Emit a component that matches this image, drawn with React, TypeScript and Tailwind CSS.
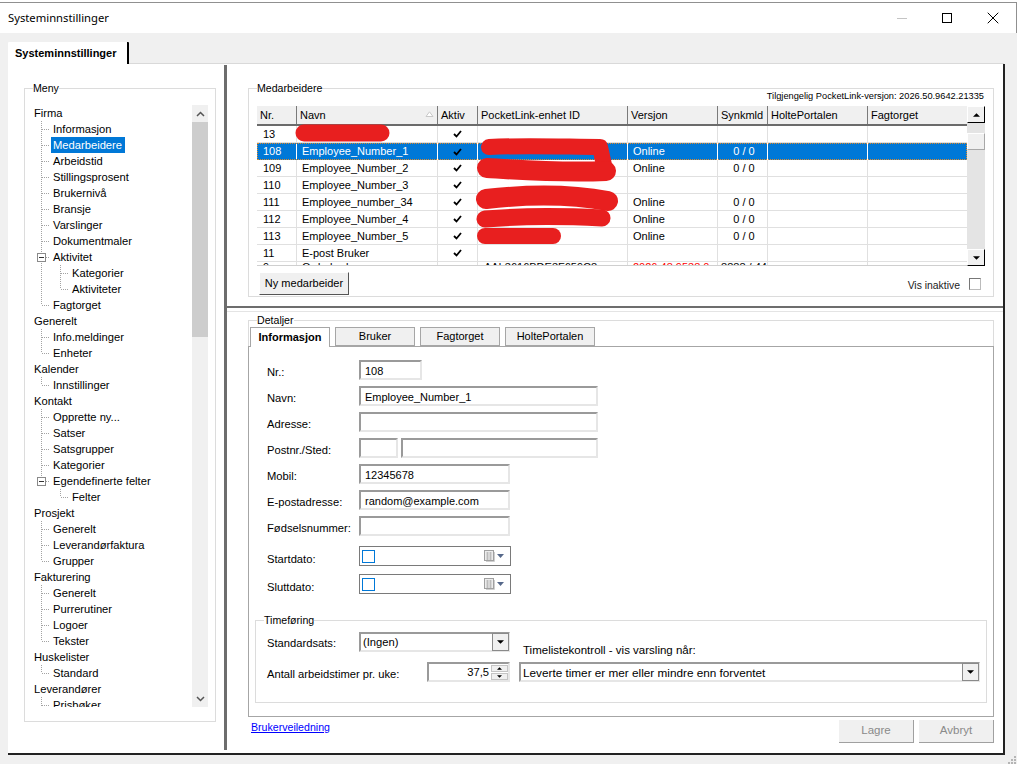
import React from "react";
import { X } from "lucide-react";

type TreeRow = { label: string; depth: 0 | 1 | 2; last?: boolean; box?: boolean; cont?: boolean; selected?: boolean };

const tree: TreeRow[] = [
  { label: "Firma", depth: 0 },
  { label: "Informasjon", depth: 1 },
  { label: "Medarbeidere", depth: 1, selected: true },
  { label: "Arbeidstid", depth: 1 },
  { label: "Stillingsprosent", depth: 1 },
  { label: "Brukernivå", depth: 1 },
  { label: "Bransje", depth: 1 },
  { label: "Varslinger", depth: 1 },
  { label: "Dokumentmaler", depth: 1 },
  { label: "Aktivitet", depth: 1, box: true },
  { label: "Kategorier", depth: 2, cont: true },
  { label: "Aktiviteter", depth: 2, cont: true, last: true },
  { label: "Fagtorget", depth: 1, last: true },
  { label: "Generelt", depth: 0 },
  { label: "Info.meldinger", depth: 1 },
  { label: "Enheter", depth: 1, last: true },
  { label: "Kalender", depth: 0 },
  { label: "Innstillinger", depth: 1, last: true },
  { label: "Kontakt", depth: 0 },
  { label: "Opprette ny...", depth: 1 },
  { label: "Satser", depth: 1 },
  { label: "Satsgrupper", depth: 1 },
  { label: "Kategorier", depth: 1 },
  { label: "Egendefinerte felter", depth: 1, box: true, last: true },
  { label: "Felter", depth: 2, last: true },
  { label: "Prosjekt", depth: 0 },
  { label: "Generelt", depth: 1 },
  { label: "Leverandørfaktura", depth: 1 },
  { label: "Grupper", depth: 1, last: true },
  { label: "Fakturering", depth: 0 },
  { label: "Generelt", depth: 1 },
  { label: "Purrerutiner", depth: 1 },
  { label: "Logoer", depth: 1 },
  { label: "Tekster", depth: 1, last: true },
  { label: "Huskelister", depth: 0 },
  { label: "Standard", depth: 1, last: true },
  { label: "Leverandører", depth: 0 },
  { label: "Prisbøker", depth: 1 },
];

const employees = [
  { nr: "13", name: "", version: "", sync: "" },
  { nr: "108", name: "Employee_Number_1", version: "Online", sync: "0 / 0", selected: true },
  { nr: "109", name: "Employee_Number_2", version: "Online", sync: "0 / 0" },
  { nr: "110", name: "Employee_Number_3", version: "", sync: "" },
  { nr: "111", name: "Employee_number_34", version: "Online", sync: "0 / 0" },
  { nr: "112", name: "Employee_Number_4", version: "Online", sync: "0 / 0" },
  { nr: "113", name: "Employee_Number_5", version: "Online", sync: "0 / 0" },
  { nr: "11", name: "E-post Bruker", version: "", sync: "" },
  { nr: "9", name: "Ordrebruker", pocket: "AAb3616BDE3F659C8", version: "2026.48.9538.0", sync: "8888 / 44", old: true },
];

const columns = ["Nr.", "Navn", "Aktiv", "PocketLink-enhet ID", "Versjon", "Synkmld", "HoltePortalen", "Fagtorget"];

const gridCols = "grid grid-cols-[40px_141px_40px_150px_90px_50px_100px_99px]";
const sunken = "border-2 border-t-[#9a9a9a] border-l-[#9a9a9a] border-r-[#e6e6e6] border-b-[#e6e6e6]";
const raised = "border border-t-white border-l-white border-r-black border-b-black";

const Connector = ({ row }: { row: TreeRow }) => {
  const dots = { stroke: "#a3a3a3", strokeWidth: 1, strokeDasharray: "1 1" };
  if (row.depth === 2) {
    return (
      <svg width="47" height="16" className="shrink-0">
        {row.cont && <line x1="16.5" y1="0" x2="16.5" y2="16" {...dots} />}
        <line x1="35.5" y1="0" x2="35.5" y2={row.last ? 8 : 16} {...dots} />
        <line x1="36" y1="8.5" x2="44" y2="8.5" {...dots} />
      </svg>
    );
  }
  return (
    <svg width="28" height="16" className="shrink-0">
      <line x1="16.5" y1="0" x2="16.5" y2={row.last ? 8 : 16} {...dots} />
      <line x1="17" y1="8.5" x2="25" y2="8.5" {...dots} />
      {row.box && (
        <g>
          <rect x="12.5" y="4.5" width="8" height="8" fill="#fff" stroke="#8a8a8a" />
          <line x1="14" y1="8.5" x2="19" y2="8.5" stroke="#333" />
        </g>
      )}
    </svg>
  );
};

const MenuTree = () => (
  <div className="mt-[10px] flex h-[602px] w-[183px]">
    <div className="min-w-0 flex-1 overflow-hidden">
      {tree.map((row, i) => (
        <div key={i} className="flex h-4 shrink-0 whitespace-nowrap leading-[14px]">
          {row.depth === 0 ? (
            <span className="pl-[9px] pt-px">{row.label}</span>
          ) : (
            <>
              <Connector row={row} />
              <span className={row.selected ? "-ml-[2px] h-4 w-[74px] bg-[#0078d7] pl-[2px] pt-px text-white" : "pt-px"}>
                {row.label}
              </span>
            </>
          )}
        </div>
      ))}
    </div>
    <div className="flex w-4 shrink-0 flex-col bg-[#f0f0f0]">
      <div className="flex h-[17px] items-center justify-center">
        <svg width="9" height="6" viewBox="0 0 9 6" fill="none" stroke="#555" strokeWidth="1.5">
          <path d="M1 5l3.5-3.5L8 5" />
        </svg>
      </div>
      <div className="h-[215px] bg-[#cdcdcd]" />
      <div className="flex-1" />
      <div className="flex h-[17px] items-center justify-center">
        <svg width="9" height="6" viewBox="0 0 9 6" fill="none" stroke="#555" strokeWidth="1.5">
          <path d="M1 1l3.5 3.5L8 1" />
        </svg>
      </div>
    </div>
  </div>
);

const Tick = () => (
  <svg width="9" height="8" viewBox="0 0 9 8" fill="none" stroke="#000" strokeWidth="1.8">
    <path d="M1 4l2.5 2.5L8 1" />
  </svg>
);

const Triangle = ({ down = true, size = 7 }: { down?: boolean; size?: number }) => (
  <svg width={size} height={Math.ceil(size / 2)} viewBox="0 0 8 4" fill="#000">
    <path d={down ? "M0 0h8L4 4z" : "M0 4h8L4 0z"} />
  </svg>
);

const EmployeeGrid = () => (
  <div className="relative ml-2 flex h-[160px] w-[728px] text-[11px]">
    <div className="w-[710px] overflow-hidden border-b border-[#cfcfcf]">
      <div className={`${gridCols} h-5 border-b-2 border-[#6b6b6b] bg-[#f0f0f0]`}>
        {columns.map((c, i) => (
          <div key={c} className={`relative h-[18px] truncate border-[#7a7a7a] pl-[3px] leading-[19px] ${i < 7 ? "border-r" : ""}`}>
            {c}
            {i === 1 && (
              <svg width="9" height="6" viewBox="0 0 9 6" className="absolute top-[5px] right-[3px]" fill="#fff" stroke="#c8c8c8">
                <path d="M4.5 .8L8 5.5H1z" />
              </svg>
            )}
          </div>
        ))}
      </div>
      {employees.map((e) => (
        <div
          key={e.nr}
          className={`${gridCols} h-[17px] ${
            e.selected
              ? "bg-[#0078d7] leading-[16px] text-white outline-1 -outline-offset-1 outline-dotted outline-[#e08a2a]"
              : e.old
                ? "leading-[11px]"
                : "border-b border-[#e0e0e0] leading-[16px]"
          }`}
        >
          <div className={`border-r pl-[6px] ${e.selected ? "border-white" : "border-[#e0e0e0]"}`}>{e.nr}</div>
          <div className={`border-r pl-[5px] ${e.selected ? "border-white" : "border-[#e0e0e0]"}`}>{e.name}</div>
          <div className={`flex items-center justify-center border-r ${e.selected ? "border-white" : "border-[#e0e0e0]"}`}>
            {!e.old && <Tick />}
          </div>
          <div className={`border-r pl-[6px] ${e.selected ? "border-white" : "border-[#e0e0e0]"}`}>{e.pocket}</div>
          <div className={`border-r pl-[5px] ${e.selected ? "border-white" : "border-[#e0e0e0]"} ${e.old ? "text-[#f00]" : ""}`}>
            {e.version}
          </div>
          <div className={`border-r pl-[3px] text-center ${e.selected ? "border-white" : "border-[#e0e0e0]"}`}>{e.sync}</div>
          <div className={`border-r ${e.selected ? "border-white" : "border-[#e0e0e0]"}`} />
          <div />
        </div>
      ))}
    </div>
    <div className="flex w-[18px] shrink-0 flex-col bg-[#e4e4e4]">
      <div className={`flex h-[17px] items-center justify-center bg-[#f0f0f0] ${raised}`}>
        <Triangle down={false} />
      </div>
      <div className="mt-[10px] h-[17px] border border-t-white border-l-white border-r-[#a8a8a8] border-b-[#a8a8a8] bg-[#f0f0f0]" />
      <div className="flex-1" />
      <div className={`flex h-[17px] items-center justify-center bg-[#f0f0f0] ${raised}`}>
        <Triangle />
      </div>
    </div>
    {/* Red scribbles painted over the screenshot */}
    <svg viewBox="257 106 728 160" className="pointer-events-none absolute inset-0 h-[160px] w-[728px]" fill="none" stroke="#e81f1f" strokeLinecap="round" strokeLinejoin="round">
      <path d="M304 133H381" strokeWidth="17" />
      <path d="M489 147C530 145 570 147 600 147L604 165" strokeWidth="16" />
      <path d="M487 168C520 170 560 173 606 171" strokeWidth="20" />
      <path d="M486 199C530 194 570 194 608 201" strokeWidth="20" />
      <path d="M485 219C520 216 560 216 602 218" strokeWidth="17" />
      <path d="M485 236H553" strokeWidth="16" />
    </svg>
  </div>
);

const FormRow = ({ label, widths, value, className = "mt-[6px]" }: { label: string; widths: string[]; value?: string; className?: string }) => (
  <div className={`flex h-5 items-center ${className}`}>
    <div className="w-[92px] shrink-0 pt-[4px]">{label}</div>
    <div className="flex gap-[3px] text-[11px]">
      {widths.map((w, i) => (
        <div key={i} className={`h-5 pl-1 leading-[18px] ${sunken} ${w}`}>
          {i === 0 ? value : ""}
        </div>
      ))}
    </div>
  </div>
);

const DateRow = ({ label, className }: { label: string; className: string }) => (
  <div className={`flex h-5 items-center ${className}`}>
    <div className="w-[92px] shrink-0 pt-[6px]">{label}</div>
    <div className="flex h-5 w-[152px] items-center border border-[#7a7a7a] pl-[2px] pr-[6px]">
      <div className="h-[13px] w-[13px] border border-[#0078d7]" />
      <div className="flex-1" />
      <svg width="11" height="12" viewBox="0 0 11 12" className="mr-[2px]">
        <rect x=".5" y=".5" width="9" height="10" fill="#ececec" stroke="#a0a0a0" />
        <path d="M2 3h6M2 5h6M2 7h6M2 9h6M3.5 2v8M6.5 2v8" stroke="#a8a8a8" strokeWidth=".6" />
        <path d="M10.5 2v9.5H2" stroke="#cfcfcf" fill="none" />
      </svg>
      <svg width="7" height="4" viewBox="0 0 7 4" fill="#56688a">
        <path d="M0 0h7L3.5 4z" />
      </svg>
    </div>
  </div>
);

const ComboButton = () => (
  <div className="-mr-px flex h-[18px] w-[17px] shrink-0 items-center justify-center border border-[#8a8a8a] bg-[#f0f0f0]">
    <Triangle />
  </div>
);

const TabButton = ({ label, w, active }: { label: string; w: string; active?: boolean }) => (
  <div
    className={`flex items-center justify-center border border-[#a6a6a6] text-[11px] ${w} ${
      active ? "relative -mb-px h-5 border-b-0 bg-white font-bold" : "h-[19px] bg-[#f0f0f0]"
    }`}
  >
    {label}
  </div>
);

export default function App() {
  return (
    <div className="h-[764px] w-[1017px] overflow-hidden bg-[#f0f0f0] font-['Liberation_Sans',Arial,sans-serif] text-[11.2px] text-black">
      {/* Title bar */}
      <div className="bg-white pt-[2px]">
        <div className="flex h-[31px] items-center border-t border-r border-[#909090] pl-2 pr-[13px]">
          <span className="flex-1 font-['Noto_Sans',sans-serif] text-[11.25px]">Systeminnstillinger</span>
          <div className="mr-[35px] h-px w-[10px] bg-[#c4c4c4]" />
          <div className="mr-[31px] h-[10px] w-[10px] border border-black" />
          <X size={20} strokeWidth={1.2} />
        </div>
      </div>

      {/* Tab strip */}
      <div className="flex h-[31px] items-end pl-2 pt-[9px]">
        <div className="flex h-[22px] w-[121px] items-center rounded-t-[1px] border-r-2 border-black bg-white pl-[7px] text-[11px] font-bold">
          Systeminnstillinger
        </div>
        <div className="h-px w-[875px] bg-[#d9d9d9]" />
      </div>

      {/* Main panel */}
      <div className="ml-2 flex h-[691px] w-[997px] border-r-2 border-b-2 border-[#222] bg-white">
        <div className="w-[216px] shrink-0 pl-4 pt-[17px]">
          <fieldset className="h-[641px] w-[192px] border border-[#dcdcdc]">
            <legend className="ml-2 text-[10.6px] leading-[14px]">Meny</legend>
            <MenuTree />
          </fieldset>
        </div>
        <div className="mb-[3px] mt-px w-[3px] shrink-0 bg-[#6d6d6d]" />

        <div className="flex min-w-0 flex-1 flex-col">
          <div className="h-[242px] pl-[21px] pt-[17px]">
            <fieldset className="h-[216px] w-[746px] border border-[#dcdcdc]">
              <legend className="ml-2 text-[10.6px] leading-[14px]">Medarbeidere</legend>
              <div className="-mt-1 h-[15px] pr-[9px] text-right text-[9.25px] leading-[10px]">
                Tilgjengelig PocketLink-versjon: 2026.50.9642.21335
              </div>
              <EmployeeGrid />
              <div className="ml-[10px] mt-[6px] flex items-center justify-between pr-3">
                <div className="flex h-[23px] w-[90px] items-center justify-center border border-t-white border-l-white border-r-[#555] border-b-[#555] bg-[#f0f0f0] text-[11px]">
                  Ny medarbeider
                </div>
                <div className="mt-[2px] flex items-center gap-[9px]">
                  <span className="pt-[3px] text-[10.4px] text-[#222]">Vis inaktive</span>
                  <div className="h-3 w-3 border border-t-[#777] border-l-[#777] border-r-[#bbb] border-b-[#bbb]" />
                </div>
              </div>
            </fieldset>
          </div>

          {/* Horizontal splitter */}
          <div className="h-[2px] bg-[#6d6d6d]" />
          <div className="h-[4px] border-b border-[#e4e4e4]" />

          <div className="pl-[21px] pt-[1px]">
            <fieldset className="w-[746px] border-x border-t border-[#dcdcdc]">
              <legend className="ml-2 text-[10.6px] leading-[14px]">Detaljer</legend>
              <div className="-mt-[1px] flex h-[20px] items-end gap-[5px] pl-[1px]">
                <TabButton label="Informasjon" w="w-[80px]" active />
                <TabButton label="Bruker" w="w-[80px]" />
                <TabButton label="Fagtorget" w="w-[80px]" />
                <TabButton label="HoltePortalen" w="w-[90px]" />
              </div>
              <div className="-mx-px h-[371px] border border-[#a6a6a6] pl-[18px] pt-[13px]">
                <FormRow label="Nr.:" widths={["w-[63px]"]} value="108" className="" />
                <FormRow label="Navn:" widths={["w-[239px]"]} value="Employee_Number_1" />
                <FormRow label="Adresse:" widths={["w-[239px]"]} />
                <FormRow label="Postnr./Sted:" widths={["w-[39px]", "w-[197px]"]} />
                <FormRow label="Mobil:" widths={["w-[151px]"]} value="12345678" />
                <FormRow label="E-postadresse:" widths={["w-[151px]"]} value="random@example.com" />
                <FormRow label="Fødselsnummer:" widths={["w-[151px]"]} />
                <DateRow label="Startdato:" className="mt-[10px]" />
                <DateRow label="Sluttdato:" className="mt-2" />

                <fieldset className="-ml-3 mt-[19px] h-[90px] w-[732px] border border-[#dcdcdc]">
                  <legend className="ml-2 text-[10.6px] leading-[14px]">Timeføring</legend>
                  <div className="mt-[5px] flex h-5 pl-[11px]">
                    <div className="flex w-[92px] items-center pt-[3px]">Standardsats:</div>
                    <div className={`flex h-5 w-[151px] items-center justify-between pl-[2px] ${sunken}`}>
                      <span className="pt-px">(Ingen)</span>
                      <ComboButton />
                    </div>
                    <div className="ml-[13px] flex h-[27px] items-end text-[11.5px]">Timelistekontroll - vis varsling når:</div>
                  </div>
                  <div className="mt-[10px] flex h-5 pl-[11px]">
                    <div className="flex w-[160px] items-center pt-[4px]">Antall arbeidstimer pr. uke:</div>
                    <div className={`flex h-5 w-[83px] items-center justify-between pl-1 ${sunken}`}>
                      <span className="flex-1 pt-px text-right">37,5</span>
                      <div className="ml-[2px] flex w-[17px] flex-col gap-px">
                        <div className="flex h-[7px] items-center justify-center border border-[#c4c4c4] bg-[#f0f0f0]">
                          <Triangle down={false} size={5} />
                        </div>
                        <div className="flex h-[7px] items-center justify-center border border-[#c4c4c4] bg-[#f0f0f0]">
                          <Triangle size={5} />
                        </div>
                      </div>
                    </div>
                    <div className={`ml-[9px] flex h-5 w-[461px] items-center justify-between pl-[2px] ${sunken}`}>
                      <span className="pt-px text-[11.75px]">Leverte timer er mer eller mindre enn forventet</span>
                      <ComboButton />
                    </div>
                  </div>
                </fieldset>
              </div>
            </fieldset>

            <div className="flex w-[746px] justify-between pt-[3px]">
              <a className="ml-[3px] text-[10.6px] leading-[14px] text-[#0000ff] underline">Brukerveiledning</a>
              <div className="flex gap-[5px] text-[11.5px] text-[#8a8a8a]">
                <div className="flex h-[23px] w-[75px] items-center justify-center border-r border-b border-[#a0a0a0] bg-[#f0f0f0]">Lagre</div>
                <div className="flex h-[23px] w-[75px] items-center justify-center border-r border-b border-[#a0a0a0] bg-[#f0f0f0]">Avbryt</div>
              </div>
            </div>
          </div>
        </div>
      </div>

      {/* Resize grip */}
      <div className="flex justify-end">
        <svg width="9" height="9" viewBox="0 0 9 9" fill="#b5b5b5">
          <path d="M6 1h2v2H6zM3 4h2v2H3zM6 4h2v2H6zM0 7h2v2H0zM3 7h2v2H3zM6 7h2v2H6z" />
        </svg>
      </div>
    </div>
  );
}
